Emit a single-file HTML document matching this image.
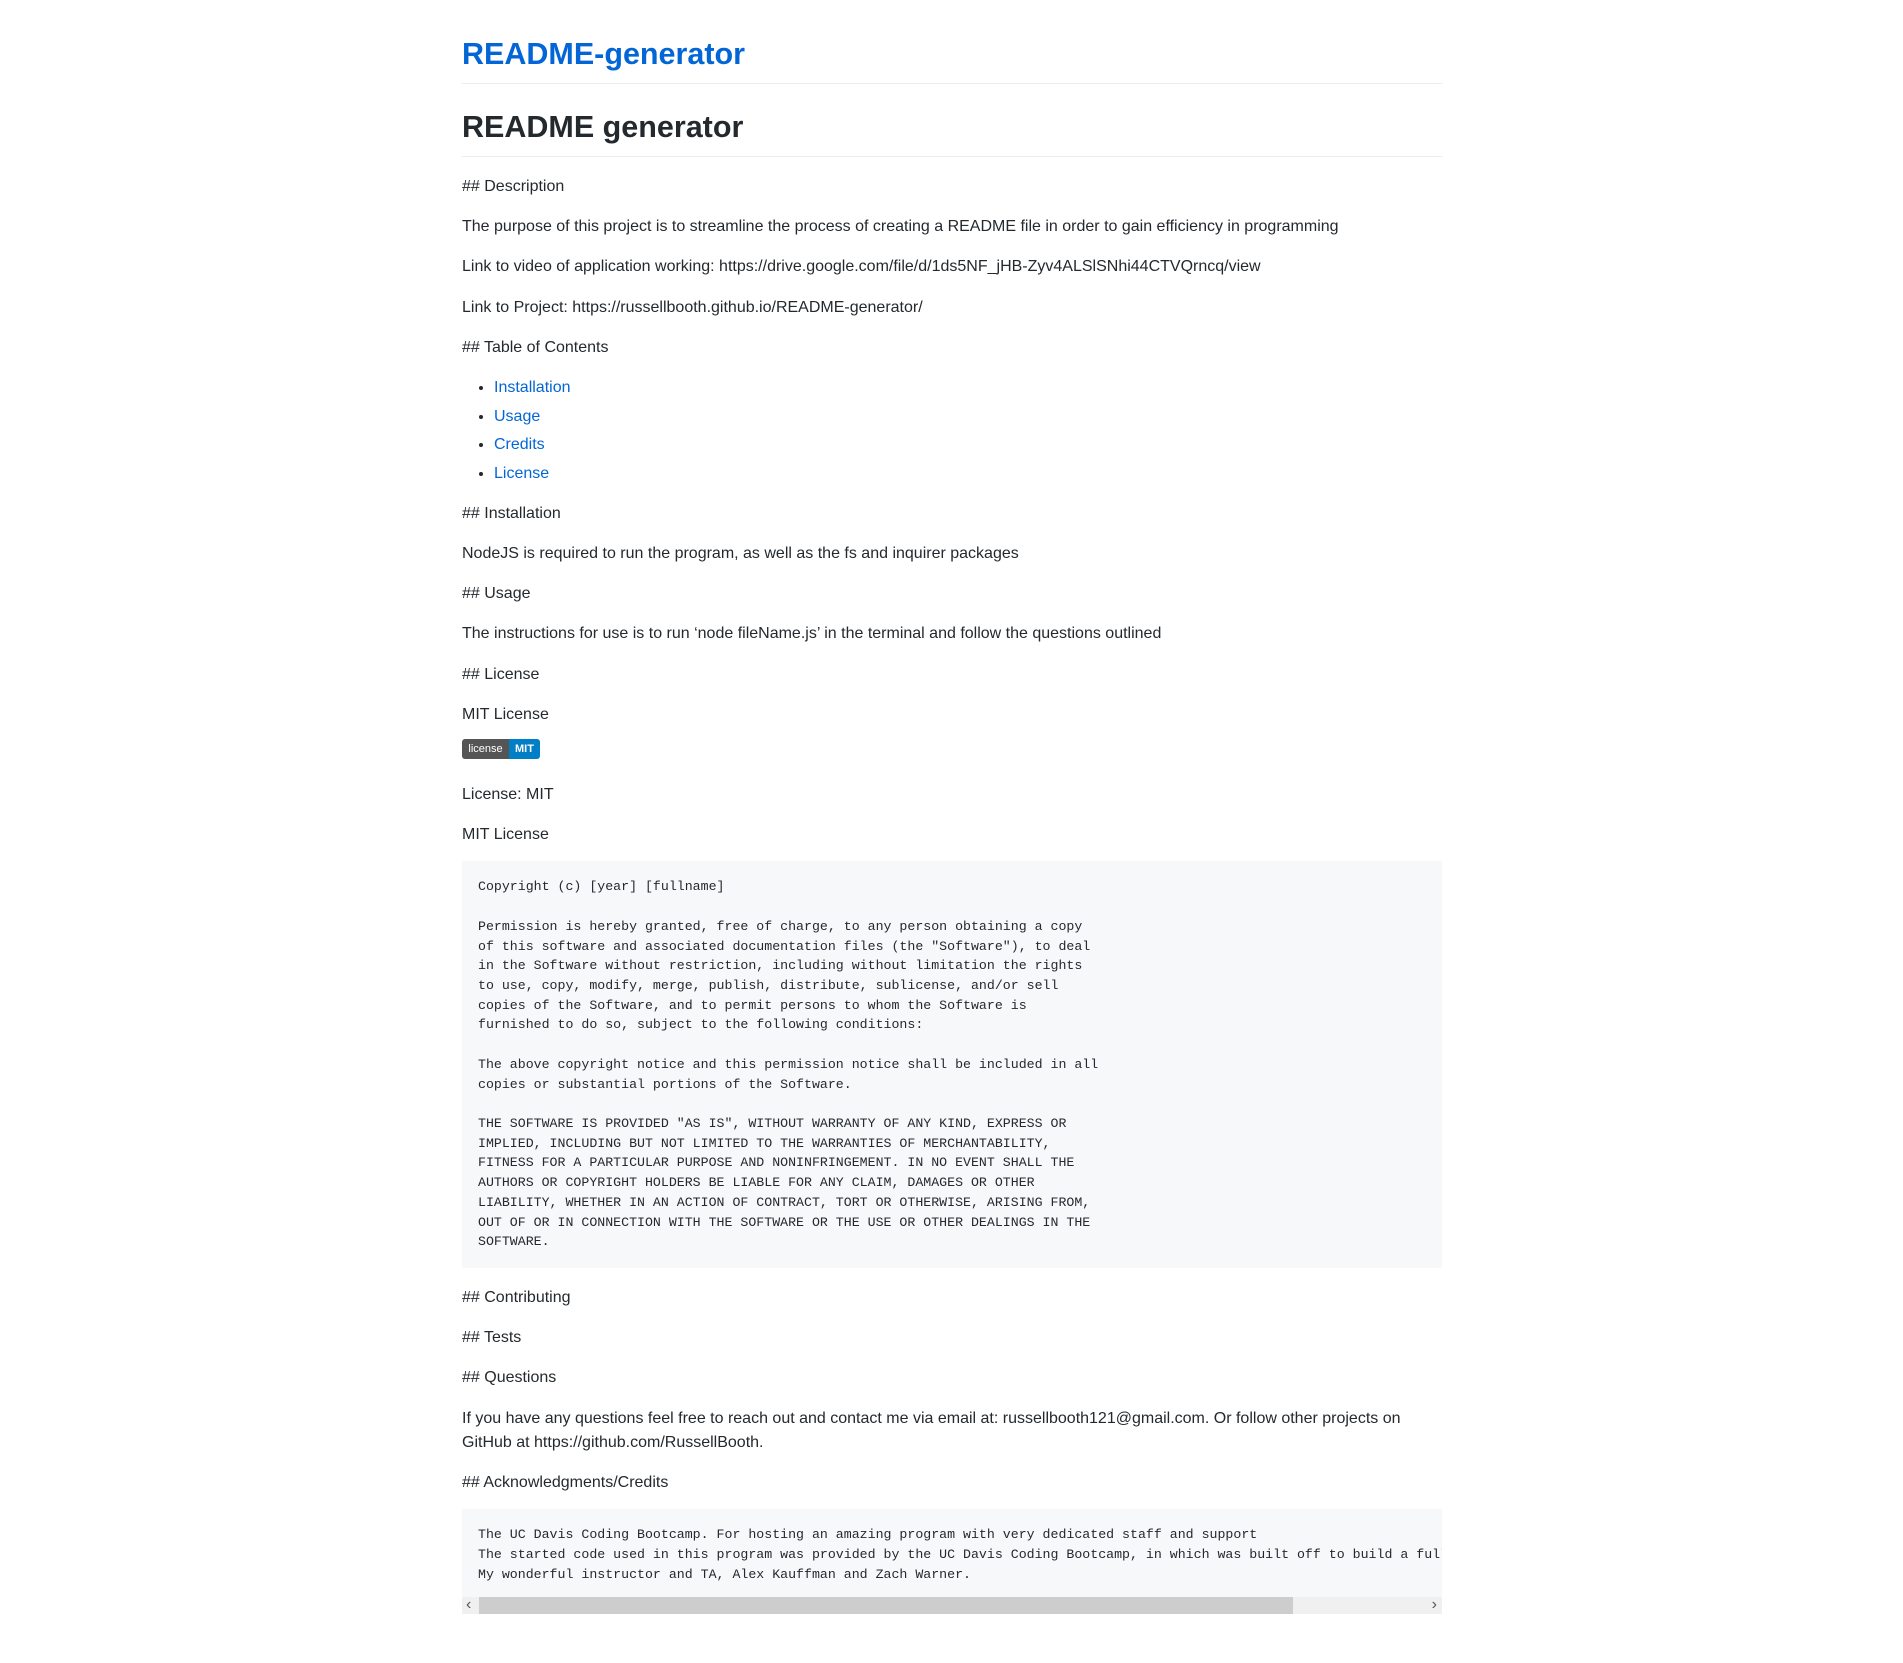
<!DOCTYPE html>
<html><head><meta charset="utf-8">
<style>
html,body{margin:0;padding:0;background:#fff;}
body{font-family:"Liberation Sans",sans-serif;color:#24292e;font-size:16px;line-height:24.2px;}
.wrap{position:relative;width:980px;margin-left:462px;padding-top:34px;}
h1{font-size:30.5px;line-height:40px;font-weight:600;margin:0 0 16px;padding-bottom:9px;border-bottom:1px solid #eaecef;}
h1.t{color:#0366d6;}
h1.s{margin-top:23px;}
p{margin:0 0 16px;position:relative;top:2px;}
ul{margin:0 0 16px;padding-left:32px;position:relative;top:2px;}
li{margin-top:4.3px;}
li:first-child{margin-top:0;}
a{color:#0366d6;text-decoration:none;}
pre{background:#f6f8fa;margin:0 0 16px;padding:16px 16px;font-family:"Liberation Mono",monospace;font-size:13.25px;line-height:19.72px;white-space:pre;overflow:hidden;}
.bp{height:24px;top:-2px;}
.badge{display:flex;width:78px;height:20px;border-radius:3px;overflow:hidden;font-size:11px;line-height:20px;color:#fff;}
.badge span:first-child{background:#555;width:47px;text-align:center;}
.badge span:last-child{background:#007ec6;width:31px;text-align:center;font-weight:bold;}
.p2{background:#f6f8fa;margin:0;}
.p2 pre{margin:0;padding:16px 16px 13px;}
.sb{position:relative;height:17px;background:#f0f0f0;}
.th{position:absolute;left:17px;width:814px;top:0;height:17px;background:#cdcdcd;}
.ar{position:absolute;top:0;font-size:16px;line-height:16px;color:#555;}
</style></head><body>
<div class="wrap">
<h1 class="t">README-generator</h1>
<h1 class="s">README generator</h1>
<p>## Description</p>
<p>The purpose of this project is to streamline the process of creating a README file in order to gain efficiency in programming</p>
<p>Link to video of application working: https://drive.google.com/file/d/1ds5NF_jHB-Zyv4ALSlSNhi44CTVQrncq/view</p>
<p>Link to Project: https://russellbooth.github.io/README-generator/</p>
<p>## Table of Contents</p>
<ul><li><a>Installation</a></li><li><a>Usage</a></li><li><a>Credits</a></li><li><a>License</a></li></ul>
<p>## Installation</p>
<p>NodeJS is required to run the program, as well as the fs and inquirer packages</p>
<p>## Usage</p>
<p>The instructions for use is to run ‘node fileName.js’ in the terminal and follow the questions outlined</p>
<p>## License</p>
<p>MIT License</p>
<p class="bp"><span class="badge"><span>license</span><span>MIT</span></span></p>
<p>License: MIT</p>
<p>MIT License</p>
<pre>Copyright (c) [year] [fullname]

Permission is hereby granted, free of charge, to any person obtaining a copy
of this software and associated documentation files (the "Software"), to deal
in the Software without restriction, including without limitation the rights
to use, copy, modify, merge, publish, distribute, sublicense, and/or sell
copies of the Software, and to permit persons to whom the Software is
furnished to do so, subject to the following conditions:

The above copyright notice and this permission notice shall be included in all
copies or substantial portions of the Software.

THE SOFTWARE IS PROVIDED "AS IS", WITHOUT WARRANTY OF ANY KIND, EXPRESS OR
IMPLIED, INCLUDING BUT NOT LIMITED TO THE WARRANTIES OF MERCHANTABILITY,
FITNESS FOR A PARTICULAR PURPOSE AND NONINFRINGEMENT. IN NO EVENT SHALL THE
AUTHORS OR COPYRIGHT HOLDERS BE LIABLE FOR ANY CLAIM, DAMAGES OR OTHER
LIABILITY, WHETHER IN AN ACTION OF CONTRACT, TORT OR OTHERWISE, ARISING FROM,
OUT OF OR IN CONNECTION WITH THE SOFTWARE OR THE USE OR OTHER DEALINGS IN THE
SOFTWARE.</pre>
<p>## Contributing</p>
<p>## Tests</p>
<p>## Questions</p>
<p>If you have any questions feel free to reach out and contact me via email at: russellbooth121@gmail.com. Or follow other projects on<br>GitHub at https://github.com/RussellBooth.</p>
<p>## Acknowledgments/Credits</p>
<div class="p2"><pre>The UC Davis Coding Bootcamp. For hosting an amazing program with very dedicated staff and support
The started code used in this program was provided by the UC Davis Coding Bootcamp, in which was built off to build a fully functional README generator.
My wonderful instructor and TA, Alex Kauffman and Zach Warner.</pre>
<div class="sb"><span class="ar" style="left:4px">&#8249;</span><div class="th"></div><span class="ar" style="right:5px">&#8250;</span></div></div>
</div>
</body></html>
